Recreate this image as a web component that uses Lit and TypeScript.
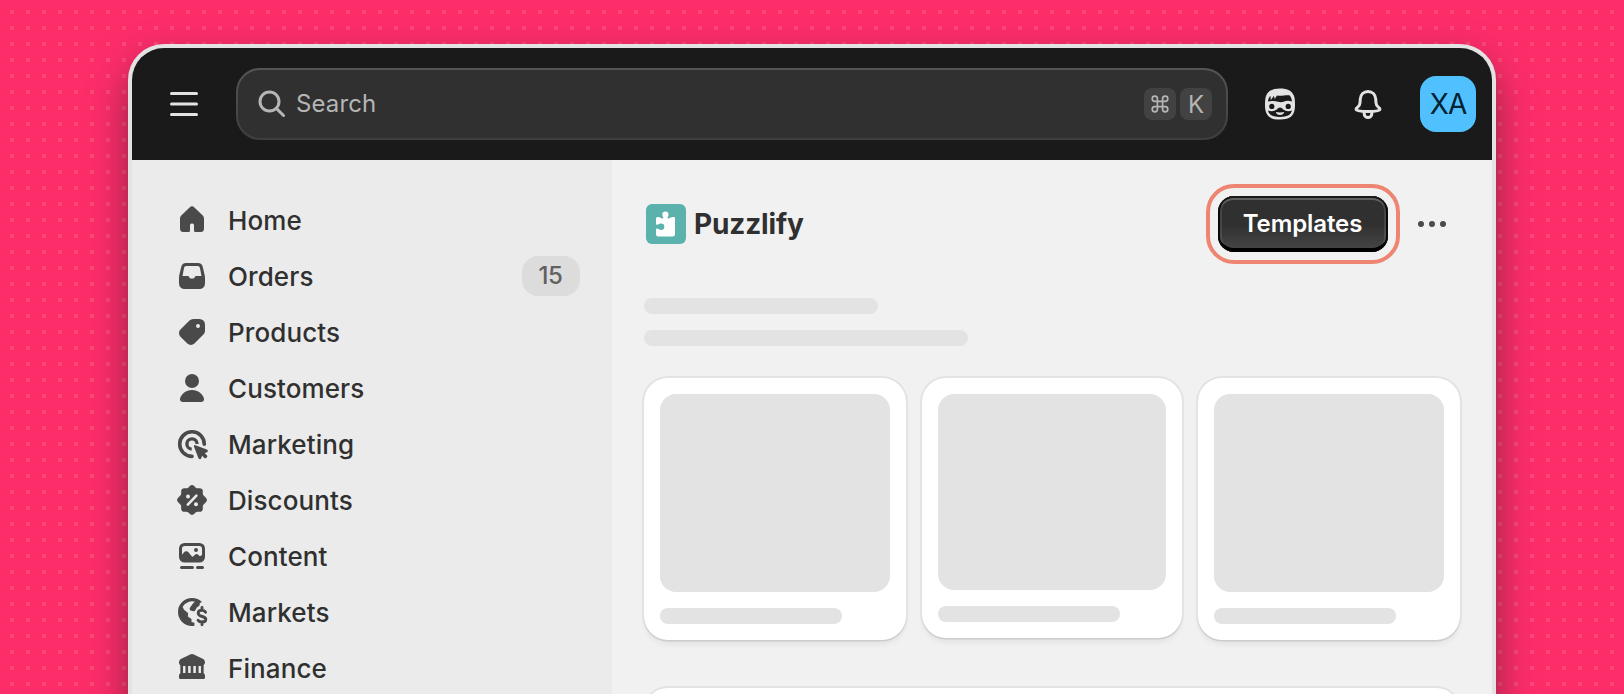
import { LitElement, html, svg, css } from 'lit';
import { customElement, property } from 'lit/decorators.js';
import { styleMap } from 'lit/directives/style-map.js';

// All icons are drawn on a 20x20 grid
const icons: Record<string, unknown> = {
  menu: svg`
    <path d="M3.75 4.75h12.5M3.75 10h12.5M3.75 15.25h12.5" fill="none" stroke="currentColor" stroke-width="1.5" stroke-linecap="round"/>`,
  search: svg`
    <circle cx="8.75" cy="8.75" r="4.75" fill="none" stroke="currentColor" stroke-width="1.5"/>
    <path d="m12.3 12.3 3.45 3.45" fill="none" stroke="currentColor" stroke-width="1.5" stroke-linecap="round"/>`,
  command: svg`
    <path d="M8 8h4v4H8zM8 8V6a2 2 0 1 0-2 2zM12 8h2a2 2 0 1 0-2-2zM12 12v2a2 2 0 1 0 2-2zM8 12H6a2 2 0 1 0 2 2z" fill="none" stroke="currentColor" stroke-width="1.3" stroke-linejoin="round"/>`,
  sidekick: svg`
    <path d="M10 2.2c3.8 0 6 1.2 6.9 3.6.5 1 .6 2.7.6 5 0 4.9-2.2 7-7.5 7s-7.5-2.1-7.5-7c0-2.2.1-3.9.6-5C3.9 3.5 6.3 2.2 10 2.2z" fill="currentColor"/>
    <path class="cut" d="M4 8.9c0-1.2.5-2.3 1.2-3l.2 2.1L7 5.9l.3 1.6 1.2-1.7c2.400.4 4.700-.5 6.400-.1.6.8 1 1.800 1.100 3.100-1.700-.6-3.200-.4-4.200.1-.9.300-1.900.3-2.800 0-1.400-.6-3.400-.5-5-.1z"/>
    <circle class="cut" cx="5.9" cy="11.2" r="1.3"/>
    <circle class="cut" cx="14.1" cy="11.2" r="1.3"/>
    <path class="cut" d="M4 13.3c2.4.7 4.1-.1 5-1.2.6-.4 1.4-.4 2 0 .9 1.100 2.600 1.900 5 1.200-.5 2.300-2.600 3.200-6 3.200s-5.500-.9-6-3.200z"/>
    <path d="M7.900 14c1.300.3 2.900.3 4.200 0-.2 1-1 1.500-2.100 1.500s-1.900-.5-2.100-1.500z" fill="currentColor"/>`,
  bell: svg`
    <path d="M10 3.750c-2.200 0-3.700 1.600-3.850 3.700l-.15 2c-.1 1-.4 1.500-1.050 2-.6.400-.95.700-.95 1.200 0 .8 1.600 1.150 6 1.150s6-.35 6-1.150c0-.5-.35-.8-.95-1.200-.65-.5-.95-1-1.050-2l-.15-2C13.700 5.350 12.200 3.750 10 3.750z" fill="none" stroke="currentColor" stroke-width="1.5"/>
    <path d="M8.100 14v.85a1.900 1.900 0 0 0 3.800 0V14" fill="none" stroke="currentColor" stroke-width="1.5"/>`,
  home: svg`
    <path d="M8.800 3.250a1.750 1.750 0 0 1 2.400 0l4.050 3.900c.48.460.75 1.100.75 1.770v4.830a1.750 1.750 0 0 1-1.750 1.750H11.750a.75.75 0 0 1-.75-.75V12a.75.75 0 0 0-.75-.75h-.5A.75.75 0 0 0 9 12v2.750a.75.75 0 0 1-.75.750h-2.500A1.750 1.750 0 0 1 4 13.750V8.920c0-.67.270-1.310.750-1.770z" fill="currentColor"/>`,
  orders: svg`
    <path fill-rule="evenodd" d="M7.200 3h5.600a2.600 2.600 0 0 1 2.620 2.160l.9 3.900c.12.500.18.900.18 1.350v2.840A2.750 2.750 0 0 1 13.750 16h-7.500a2.750 2.750 0 0 1-2.750-2.750v-2.840c0-.45.060-.85.150-1.350l.93-3.900A2.600 2.600 0 0 1 7.200 3zm0 1.500c-.62 0-1.100.45-1.200 1.060l-.75 3.940h2.550c.4 0 .7.250.84.600.14.400.5.650.9.650h.9c.4 0 .76-.25.9-.65.140-.35.440-.6.840-.6h2.550l-.75-3.940A1.250 1.250 0 0 0 12.800 4.500z" fill="currentColor"/>`,
  products: svg`
    <path fill-rule="evenodd" d="M10.660 3h3.090a2.750 2.750 0 0 1 2.750 2.750v3.090c0 .73-.29 1.430-.8 1.940l-4.490 4.490a2.500 2.500 0 0 1-3.540 0l-3.440-3.440a2.500 2.500 0 0 1 0-3.540L8.720 3.800A2.750 2.750 0 0 1 10.660 3zM13 7.500a1 1 0 1 0 0-2 1 1 0 0 0 0 2z" fill="currentColor"/>`,
  customers: svg`
    <circle cx="10" cy="6" r="3.5" fill="currentColor"/>
    <path d="M4 15.100c0-1.600 2.200-4.600 6-4.600s6 3 6 4.600c0 .85-.6 1.400-1.400 1.400H5.400c-.8 0-1.400-.55-1.400-1.400z" fill="currentColor"/>`,
  marketing: svg`
    <path d="M16.150 9.600A6.150 6.150 0 1 0 10 15.700" fill="none" stroke="currentColor" stroke-width="1.8" stroke-linecap="round"/>
    <path d="M12.550 9.500a2.550 2.550 0 1 0-2.700 2.550" fill="none" stroke="currentColor" stroke-width="1.7"/>
    <path d="M11.700 10.100l5.700 2.100c.7.260.7 1.150.05 1.430l-1.050.47 1.050 1.050c.7.700-.6 2-1.300 1.300l-1.050-1.050-.5 1.200c-.28.650-1.180.620-1.430-.05l-2.150-5.700c-.2-.5.180-.95.680-.75z" fill="currentColor"/>`,
  discounts: svg`
    <path d="M8.700 2.700a1.800 1.800 0 0 1 2.600 0l.5.500c.34.340.8.500 1.280.45l.7-.05a1.550 1.550 0 0 1 1.650 1.650l-.05.700c-.05.480.110.940.450 1.280l.97.970a1.800 1.800 0 0 1 0 2.600l-.97.970c-.34.340-.5.800-.45 1.280l.05.700a1.550 1.550 0 0 1-1.650 1.650l-.7-.05c-.48-.05-.94.110-1.280.45l-.5.500a1.800 1.800 0 0 1-2.600 0l-.5-.5a1.600 1.600 0 0 0-1.280-.45l-.7.050a1.550 1.550 0 0 1-1.650-1.650l.05-.7a1.600 1.600 0 0 0-.45-1.280l-.97-.97a1.800 1.800 0 0 1 0-2.600l.97-.97c.34-.34.5-.8.450-1.280l-.05-.7A1.550 1.550 0 0 1 6.220 3.600l.7.050c.48.050.940-.11 1.280-.45z" fill="currentColor"/>
    <path class="mark" d="m7.900 11.800 4.300-4.500"/>
    <circle class="hole" cx="8" cy="7.700" r="1"/>
    <circle class="hole" cx="12" cy="11.600" r="1"/>`,
  content: svg`
    <path fill-rule="evenodd" d="M6.250 3h7.500a2.750 2.750 0 0 1 2.750 2.750v4.300a2.750 2.750 0 0 1-2.750 2.750h-7.500A2.750 2.750 0 0 1 3.500 10.050v-4.300A2.750 2.750 0 0 1 6.250 3zm0 1.500C5.560 4.500 5 5.060 5 5.750v3.100l.9-1.100a1.600 1.600 0 0 1 2.450 0l1.500 1.850c.2.250.6.300.85.050l.8-.75a1.200 1.200 0 0 1 1.650.03l.4.400c.35.350.8.350 1.450-.33V5.750c0-.69-.56-1.250-1.250-1.250z" fill="currentColor"/>
    <circle cx="12" cy="6.500" r="1" fill="currentColor"/>
    <path d="M4.750 15.250h5.500M12.750 15.250h2.500" fill="none" stroke="currentColor" stroke-width="1.5" stroke-linecap="round"/>`,
  markets: svg`
    <path fill-rule="evenodd" d="M10 2.500c2 0 3.700.75 5 2l-1.050.55-.2 1.200-1.300.95-.9 1.500c-.5.700-1.350.3-1.800.2-.9-.2-1.200-1-.7-1.700l1.100-1.500c.3-.5.750-.9 1.400-1.300A5.500 5.500 0 0 0 5.300 6.900l.7 1.500 1.600 1.200c.8.600.4 1.500.3 2.100l1.500 1.100c.7.500.3 1.300.3 1.700l1.500.4v1.500c-.4.070-.8.100-1.200.1a7 7 0 0 1 0-14z" fill="currentColor"/>
    <path d="M15 7.200v1.400M15 14.400v1.500M16.800 9.600c-.4-.7-1-.95-1.800-.95-1.200 0-1.900.6-1.900 1.450 0 2.150 3.800 1.150 3.800 3 0 .9-.75 1.400-1.900 1.400-.95 0-1.600-.3-1.950-.9" fill="none" stroke="currentColor" stroke-width="1.45" stroke-linecap="round"/>`,
  finance: svg`
    <path d="M9.350 2.670a1.500 1.500 0 0 1 1.300 0l4.700 2.200c.7.330 1.150 1 1.150 1.780 0 1-.8 1.850-1.850 1.850H5.350A1.850 1.850 0 0 1 3.500 6.650c0-.78.450-1.450 1.150-1.780z" fill="currentColor"/>
    <path d="M4.850 8v4.500M7.400 8v4.500M10 8v4.500M12.600 8v4.500M15.150 8v4.500" fill="none" stroke="currentColor" stroke-width="1.35"/>
    <path d="M5 12h10a1.500 1.500 0 0 1 1.500 1.500v.75a.75.75 0 0 1-.75.750H4.250a.75.75 0 0 1-.75-.75V13.500A1.500 1.500 0 0 1 5 12z" fill="currentColor"/>`,
  more: svg`
    <path d="M6 10a1.500 1.500 0 1 1-3 0 1.500 1.500 0 0 1 3 0zM11.500 10a1.500 1.500 0 1 1-3 0 1.500 1.500 0 0 1 3 0zM17 10a1.500 1.500 0 1 1-3 0 1.500 1.500 0 0 1 3 0z" fill="currentColor"/>`,
};

@customElement('ui-icon')
export class UiIcon extends LitElement {
  @property({ type: String })
  name = '';

  static styles = css`
    :host {
      display: block;
      flex: none;
      width: 40px;
      height: 40px;
    }

    svg {
      display: block;
      width: 100%;
      height: 100%;
    }

    .cut {
      fill: #1a1a1a;
    }

    .hole {
      fill: #ebebeb;
    }

    .mark {
      fill: none;
      stroke: #ebebeb;
      stroke-width: 1.3;
      stroke-linecap: round;
    }
  `;

  render() {
    return html`<svg viewBox="0 0 20 20" aria-hidden="true">${icons[this.name]}</svg>`;
  }
}

@customElement('top-bar')
export class TopBar extends LitElement {
  static styles = css`
    :host {
      display: flex;
      flex: none;
      align-items: center;
      height: 112px;
      padding: 0 16px 0 32px;
      box-sizing: border-box;
      background: #1a1a1a;
      color: #e3e3e3;
    }

    .search {
      flex: 1;
      display: flex;
      align-items: center;
      height: 72px;
      margin: 0 32px;
      padding: 0 14px;
      box-sizing: border-box;
      border: 2px solid transparent;
      border-radius: 24px;
      background:
        linear-gradient(#303030, #303030) padding-box,
        linear-gradient(#555, #3e3e3e) border-box;
      color: #b5b5b5;
      font-size: 24px;
    }

    .label {
      flex: 1;
      margin-left: 4px;
      padding-bottom: 2px;
      letter-spacing: 0.1px;
    }

    .key {
      display: flex;
      align-items: center;
      justify-content: center;
      width: 32px;
      height: 32px;
      margin-left: 4px;
      border-radius: 8px;
      background: #424242;
    }

    .key ui-icon {
      width: 26px;
      height: 26px;
    }

    .bell {
      margin: 0 32px 0 48px;
    }

    .avatar {
      display: flex;
      align-items: center;
      justify-content: center;
      width: 56px;
      height: 56px;
      border-radius: 16px;
      background: #51c0ff;
      color: #00212f;
      font-size: 28px;
      letter-spacing: -1px;
    }
  `;

  render() {
    return html`
      <ui-icon name="menu"></ui-icon>
      <div class="search">
        <ui-icon name="search"></ui-icon>
        <span class="label">Search</span>
        <span class="key"><ui-icon name="command"></ui-icon></span>
        <span class="key">K</span>
      </div>
      <ui-icon name="sidekick"></ui-icon>
      <ui-icon class="bell" name="bell"></ui-icon>
      <div class="avatar">XA</div>
    `;
  }
}

@customElement('side-nav')
export class SideNav extends LitElement {
  @property({ attribute: false })
  items: { label: string; icon: string; count?: number }[] = [
    { label: 'Home', icon: 'home' },
    { label: 'Orders', icon: 'orders', count: 15 },
    { label: 'Products', icon: 'products' },
    { label: 'Customers', icon: 'customers' },
    { label: 'Marketing', icon: 'marketing' },
    { label: 'Discounts', icon: 'discounts' },
    { label: 'Content', icon: 'content' },
    { label: 'Markets', icon: 'markets' },
    { label: 'Finance', icon: 'finance' },
  ];

  static styles = css`
    :host {
      display: block;
      width: 480px;
      padding: 33px 32px 0 40px;
      box-sizing: border-box;
      background: #ebebeb;
      color: #303030;
    }

    .item {
      display: flex;
      align-items: center;
      height: 56px;
      font-size: 26px;
      font-weight: 550;
      letter-spacing: 0.1px;
    }

    ui-icon {
      margin: 0 16px 0 0;
      color: #4a4a4a;
    }

    .name {
      flex: 1;
      padding-bottom: 2px;
    }

    .badge {
      width: 58px;
      height: 40px;
      margin-bottom: 2px;
      padding-right: 1px;
      box-sizing: border-box;
      border-radius: 16px;
      background: #dcdcdc;
      color: #616161;
      font-size: 24px;
      line-height: 40px;
      text-align: center;
      letter-spacing: -0.5px;
    }
  `;

  render() {
    return html`
      <nav>
        ${this.items.map(
          (item) => html`
            <div class="item">
              <ui-icon name="${item.icon}"></ui-icon>
              <span class="name">${item.label}</span>
              ${item.count ? html`<span class="badge">${item.count}</span>` : ''}
            </div>
          `
        )}
      </nav>
    `;
  }
}

@customElement('app-page')
export class AppPage extends LitElement {
  static styles = css`
    :host {
      display: block;
      flex: 1;
      padding: 36px 32px 0;
      background: #f1f1f1;
      color: #303030;
    }

    header {
      display: flex;
      align-items: center;
      height: 56px;
      padding: 0 8px 0 2px;
    }

    .logo {
      width: 40px;
      height: 40px;
      border-radius: 6px;
      background: #5bb2ac;
    }

    .logo svg {
      display: block;
    }

    h1 {
      flex: 1;
      margin: 0 0 0 8px;
      font-size: 28px;
      font-weight: 650;
      letter-spacing: -0.15px;
    }

    button {
      width: 170px;
      height: 56px;
      margin-right: 24px;
      padding: 0 1px 1px 0;
      border: 0;
      border-radius: 16px;
      outline: 4px solid #ee8571;
      outline-offset: 8px;
      background: linear-gradient(#303030 50%, #474747);
      box-shadow:
        inset 0 2px 0 #1a1a1a,
        inset 2px 0 0 #0a0a0a,
        inset -2px 0 0 #0a0a0a,
        inset 0 -4px 0 #000,
        inset 0 4px 0 #616161,
        inset 4px 0 0 rgba(255, 255, 255, 0.1),
        inset -4px 0 0 rgba(255, 255, 255, 0.1);
      color: #fff;
      font: inherit;
      font-size: 24px;
      font-weight: 630;
      letter-spacing: -0.1px;
    }

    .more {
      color: #4a4a4a;
    }

    .line {
      height: 16px;
      border-radius: 8px;
      background: #e3e3e3;
    }

    .intro {
      display: grid;
      gap: 16px;
      margin: 46px 0 32px;
    }

    .cards {
      display: grid;
      grid-template-columns: 262px 260px 262px;
      align-items: start;
      gap: 16px;
      margin-bottom: 48px;
    }

    .card {
      display: flex;
      flex-direction: column;
      gap: 16px;
      aspect-ratio: 1;
      padding: 16px;
      box-sizing: border-box;
      border-radius: 24px;
      background: #fff;
      box-shadow:
        0 1.5px 0 #ccc,
        0 0 0 2px #e3e3e3,
        0 6px 6px -2px rgba(26, 26, 26, 0.07);
    }

    .card.wide {
      width: 816px;
    }

    .image {
      flex: 1;
      border-radius: 16px;
      background: #e3e3e3;
    }
  `;

  render() {
    return html`
      <header>
        <div class="logo">
          <svg width="40" height="40" viewBox="0 0 40 40" aria-hidden="true">
            <path
              d="M11 13.300c1.800-.9 3.300.3 4.700 1 1 .5 1.700.2 1.500-.9-.2-1-.9-1.600-.9-2.700a3.100 3.100 0 0 1 6.200 0c0 1.100-.7 1.700-.9 2.700-.2 1.100.5 1.400 1.500.9 1.400-.7 2.700-1.800 4.700-1.200.7 0 1.200.5 1.200 1.200V30c0 1.700-.8 2.500-2.500 2.500H12.500c-1.700 0-2.500-.8-2.500-2.500v-4.200c0-1.200.8-1.500 1.900-1 1.100.6 2 1.100 3.200 1.100a3.200 3.200 0 0 0 0-6.400c-1.200 0-2.100.5-3.200 1.100-1.100.5-1.900.1-1.900-1v-5c0-.6.300-1.200 1-1.300z"
              fill="#fff"
            />
          </svg>
        </div>
        <h1>Puzzlify</h1>
        <button type="button">Templates</button>
        <ui-icon class="more" name="more"></ui-icon>
      </header>
      <div class="intro">
        ${[234, 324].map((width) => this._line(width))}
      </div>
      <div class="cards">
        ${[1, 2, 3].map(
          () => html`
            <div class="card">
              <div class="image"></div>
              ${this._line(182)}
            </div>
          `
        )}
      </div>
      <div class="card wide"></div>
    `;
  }

  _line(width: number) {
    return html`<div class="line" style=${styleMap({ width: `${width}px` })}></div>`;
  }
}

@customElement('app-root')
export class AppRoot extends LitElement {
  static styles = css`
    :host {
      display: block;
      height: 694px;
      padding: 44px 128px 0;
      box-sizing: border-box;
      overflow: hidden;
      background: conic-gradient(from 0deg at 4px 4px, transparent 270deg, #fd4877 0) 10px 10px / 16px 16px #fd2d6a;
      font-family: Inter, 'Liberation Sans', sans-serif;
    }

    .window {
      display: flex;
      flex-direction: column;
      height: 800px;
      box-sizing: border-box;
      border: 4px solid #e3e3e3;
      border-radius: 36px;
      background: #f1f1f1;
      overflow: hidden;
      box-shadow: 0 18px 40px -3px rgba(26, 26, 26, 0.55);
    }

    .body {
      flex: 1;
      display: flex;
    }
  `;

  render() {
    return html`
      <div class="window">
        <top-bar></top-bar>
        <div class="body">
          <side-nav></side-nav>
          <app-page></app-page>
        </div>
      </div>
    `;
  }
}
